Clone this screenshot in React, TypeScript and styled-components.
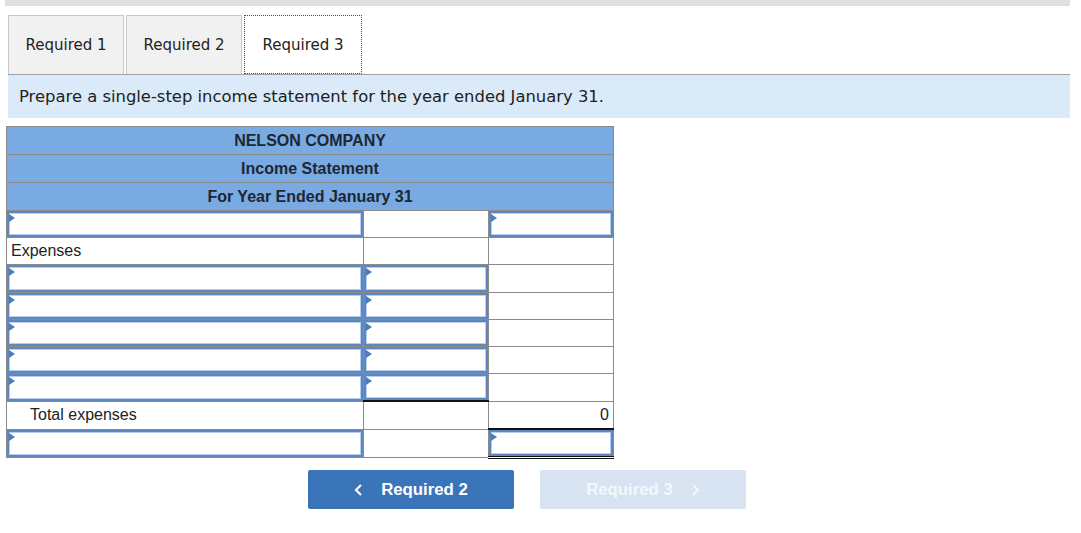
import React from 'react';
import styled, { createGlobalStyle } from 'styled-components';

const GlobalStyle = createGlobalStyle`
body {
  margin: 0;
  background: #ffffff;
  font-family: "Liberation Sans", Arial, sans-serif;
}
`

const Page = styled.div`
width: 1081px;
padding: 0 11px 0 5px;
box-sizing: border-box;
`

const TopBar = styled.div`
height: 6px;
background: #e0e0e0;
`

const TabRow = styled.div`
display: flex;
gap: 2px;
margin: 9px 0 0 3px;
border-bottom: 1px solid #a0a0a0;
`

const Tab = styled.div<{ $active?: boolean }>`
width: ${props => props.$active ? '118px' : '116px'};
height: 59px;
box-sizing: border-box;
display: flex;
align-items: center;
justify-content: center;
font-family: "DejaVu Sans", Verdana, sans-serif;
font-size: 15px;
color: #222;
background: ${props => props.$active ? '#ffffff' : '#f1f1f1'};
border: ${props => props.$active ? '1px dotted #3b4a5a' : '1px solid #c8c8c8'};
border-bottom: ${props => props.$active ? '1px dotted #3b4a5a' : 'none'};
margin-bottom: ${props => props.$active ? '-1px' : '0'};
`

const Instruction = styled.div`
margin-left: 3px;
height: 43px;
display: flex;
align-items: center;
padding-left: 11px;
background: #dbeaf8;
font-family: "DejaVu Sans", Verdana, sans-serif;
font-size: 16.4px;
color: #222;
`

const Sheet = styled.table`
margin: 8px 0 0 1px;
border-collapse: collapse;
width: 608px;
table-layout: fixed;
`

const HeadCell = styled.td`
height: 27px;
padding: 0;
background: #7aaae2;
border: 1px solid #8a8a8a;
text-align: center;
font-weight: bold;
font-size: 16px;
color: #1c2733;
`

const Cell = styled.td<{ $topRule?: boolean; $doubleBottom?: boolean; $align?: string; $indent?: number }>`
height: 26.2px;
padding: 0 ${props => props.$align === 'right' ? '4px' : '0'} 0 ${props => props.$indent ?? 0}px;
border: 1px solid #8a8a8a;
${props => props.$topRule ? 'border-top: 2px solid #111;' : ''}
${props => props.$doubleBottom ? 'border-bottom: 3px double #111;' : ''}
text-align: ${props => props.$align ?? 'left'};
font-size: 16px;
color: #222;
position: relative;
`

const InputBox = styled.div`
position: absolute;
inset: 0;
border: 2px solid #5f86bd;
box-shadow: inset 0 0 0 1px #b6cfee;
background: #fff;
`

const Marker = styled.span`
position: absolute;
left: 0;
top: 1px;
width: 0;
height: 0;
border-top: 4px solid transparent;
border-bottom: 4px solid transparent;
border-left: 6px solid #4a7cc0;
`

const ButtonRow = styled.div`
display: flex;
gap: 26px;
margin: 11px 0 0 303px;
`

const NavButton = styled.div<{ $disabled?: boolean }>`
width: 206px;
height: 39px;
display: flex;
align-items: center;
justify-content: center;
gap: 18px;
border-radius: 2px;
background: ${props => props.$disabled ? '#d7e3f1' : '#3a74b9'};
color: ${props => props.$disabled ? '#f3f7fc' : '#ffffff'};
font-weight: bold;
font-size: 16.8px;
`

function Input(): JSX.Element {
    return (
        <InputBox>
            <Marker />
        </InputBox>
    )
}

function Chevron({ dir }: { dir: 'left' | 'right' }): JSX.Element {
    const d = dir === 'left' ? 'M7 1 L2 6 L7 11' : 'M2 1 L7 6 L2 11'
    return (
        <svg width="9" height="12" viewBox="0 0 9 12">
            <path d={d} fill="none" stroke="currentColor" strokeWidth="2.2" />
        </svg>
    )
}

const expenseRows = [0, 1, 2, 3, 4]

export default function App(): JSX.Element {
    return (
        <Page>
            <GlobalStyle />
            <TopBar />
            <TabRow>
                <Tab>Required 1</Tab>
                <Tab>Required 2</Tab>
                <Tab $active>Required 3</Tab>
            </TabRow>
            <Instruction>Prepare a single-step income statement for the year ended January 31.</Instruction>
            <Sheet>
                <colgroup>
                    <col style={{ width: 357 }} />
                    <col style={{ width: 125 }} />
                    <col style={{ width: 125 }} />
                </colgroup>
                <tbody>
                    <tr><HeadCell colSpan={3}>NELSON COMPANY</HeadCell></tr>
                    <tr><HeadCell colSpan={3}>Income Statement</HeadCell></tr>
                    <tr><HeadCell colSpan={3}>For Year Ended January 31</HeadCell></tr>
                    <tr>
                        <Cell><Input /></Cell>
                        <Cell />
                        <Cell><Input /></Cell>
                    </tr>
                    <tr>
                        <Cell $indent={4}>Expenses</Cell>
                        <Cell />
                        <Cell />
                    </tr>
                    {expenseRows.map(i => (
                        <tr key={i}>
                            <Cell><Input /></Cell>
                            <Cell><Input /></Cell>
                            <Cell />
                        </tr>
                    ))}
                    <tr>
                        <Cell $indent={23}>Total expenses</Cell>
                        <Cell $topRule />
                        <Cell $align="right">0</Cell>
                    </tr>
                    <tr>
                        <Cell><Input /></Cell>
                        <Cell />
                        <Cell $topRule $doubleBottom><Input /></Cell>
                    </tr>
                </tbody>
            </Sheet>
            <ButtonRow>
                <NavButton><Chevron dir="left" />Required 2</NavButton>
                <NavButton $disabled>Required 3<Chevron dir="right" /></NavButton>
            </ButtonRow>
        </Page>
    )
}
